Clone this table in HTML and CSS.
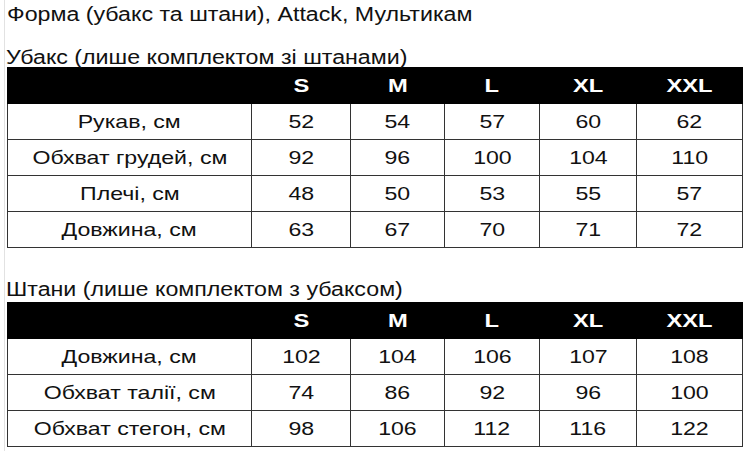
FILE: index.html
```html
<!DOCTYPE html>
<html lang="uk">
<head>
<meta charset="utf-8">
<title>Форма (убакс та штани), Attack, Мультикам</title>
<link rel="stylesheet" href="styles.css">
</head>
<body>
<div class="page">
  <div class="title main"><span>Форма (убакс та штани), Attack, Мультикам</span></div>
  <div class="title sub first"><span>Убакс (лише комплектом зі штанами)</span></div>
  <table class="sizes">
    <colgroup>
      <col class="c0"><col class="c1"><col class="c2"><col class="c3"><col class="c4"><col class="c5">
    </colgroup>
    <thead>
      <tr><th></th><th><span>S</span></th><th><span>M</span></th><th><span>L</span></th><th><span>XL</span></th><th><span>XXL</span></th></tr>
    </thead>
    <tbody>
      <tr><td><span>Рукав, см</span></td><td><span>52</span></td><td><span>54</span></td><td><span>57</span></td><td><span>60</span></td><td><span>62</span></td></tr>
      <tr><td><span>Обхват грудей, см</span></td><td><span>92</span></td><td><span>96</span></td><td><span>100</span></td><td><span>104</span></td><td><span>110</span></td></tr>
      <tr><td><span>Плечі, см</span></td><td><span>48</span></td><td><span>50</span></td><td><span>53</span></td><td><span>55</span></td><td><span>57</span></td></tr>
      <tr><td><span>Довжина, см</span></td><td><span>63</span></td><td><span>67</span></td><td><span>70</span></td><td><span>71</span></td><td><span>72</span></td></tr>
    </tbody>
  </table>
  <div class="title sub second"><span>Штани (лише комплектом з убаксом)</span></div>
  <table class="sizes">
    <colgroup>
      <col class="c0"><col class="c1"><col class="c2"><col class="c3"><col class="c4"><col class="c5">
    </colgroup>
    <thead>
      <tr><th></th><th><span>S</span></th><th><span>M</span></th><th><span>L</span></th><th><span>XL</span></th><th><span>XXL</span></th></tr>
    </thead>
    <tbody>
      <tr><td><span>Довжина, см</span></td><td><span>102</span></td><td><span>104</span></td><td><span>106</span></td><td><span>107</span></td><td><span>108</span></td></tr>
      <tr><td><span>Обхват талії, см</span></td><td><span>74</span></td><td><span>86</span></td><td><span>92</span></td><td><span>96</span></td><td><span>100</span></td></tr>
      <tr><td><span>Обхват стегон, см</span></td><td><span>98</span></td><td><span>106</span></td><td><span>112</span></td><td><span>116</span></td><td><span>122</span></td></tr>
    </tbody>
  </table>
</div>
</body>
</html>
```
FILE: styles.css
```css
html, body {
  margin: 0;
  padding: 0;
  background: #fff;
}
body {
  font-family: "Liberation Sans", Arial, sans-serif;
  color: #111;
}
.page {
  border-left: 1px solid #e2e2e2;
  margin-left: 4px;
  padding-left: 1px;
  min-height: 451px;
  box-sizing: border-box;
}
.title {
  font-size: 19.5px;
  line-height: 20px;
  white-space: nowrap;
}
.title span {
  display: inline-block;
  transform-origin: left center;
  transform: scaleX(1.19);
}
.title.main {
  padding-top: 4px;
  height: 20px;
  margin-bottom: 17px;
  margin-left: 1px;
}
.title.sub.first {
  padding-top: 6px;
  height: 20px;
}
.title.sub.second {
  margin-top: 28px;
  padding-top: 3px;
  height: 23px;
}
.sizes {
  border-collapse: collapse;
  table-layout: fixed;
  width: 736px;
  margin-left: 1px;
}
.sizes .c0 { width: 244px; }
.sizes .c1 { width: 99px; }
.sizes .c2 { width: 94px; }
.sizes .c3 { width: 95px; }
.sizes .c4 { width: 97px; }
.sizes .c5 { width: 106px; }
.sizes th {
  background: #000;
  color: #fff;
  font-weight: bold;
  font-size: 19px;
  height: 35px;
  padding: 0;
  border: 1px solid #000;
  text-align: center;
  vertical-align: middle;
}
.sizes td {
  font-size: 18.5px;
  height: 35px;
  padding: 0;
  border: 1px solid #333;
  text-align: center;
  vertical-align: middle;
  color: #111;
}
.sizes th span,
.sizes td span {
  display: inline-block;
  transform: scaleX(1.25);
}
```
